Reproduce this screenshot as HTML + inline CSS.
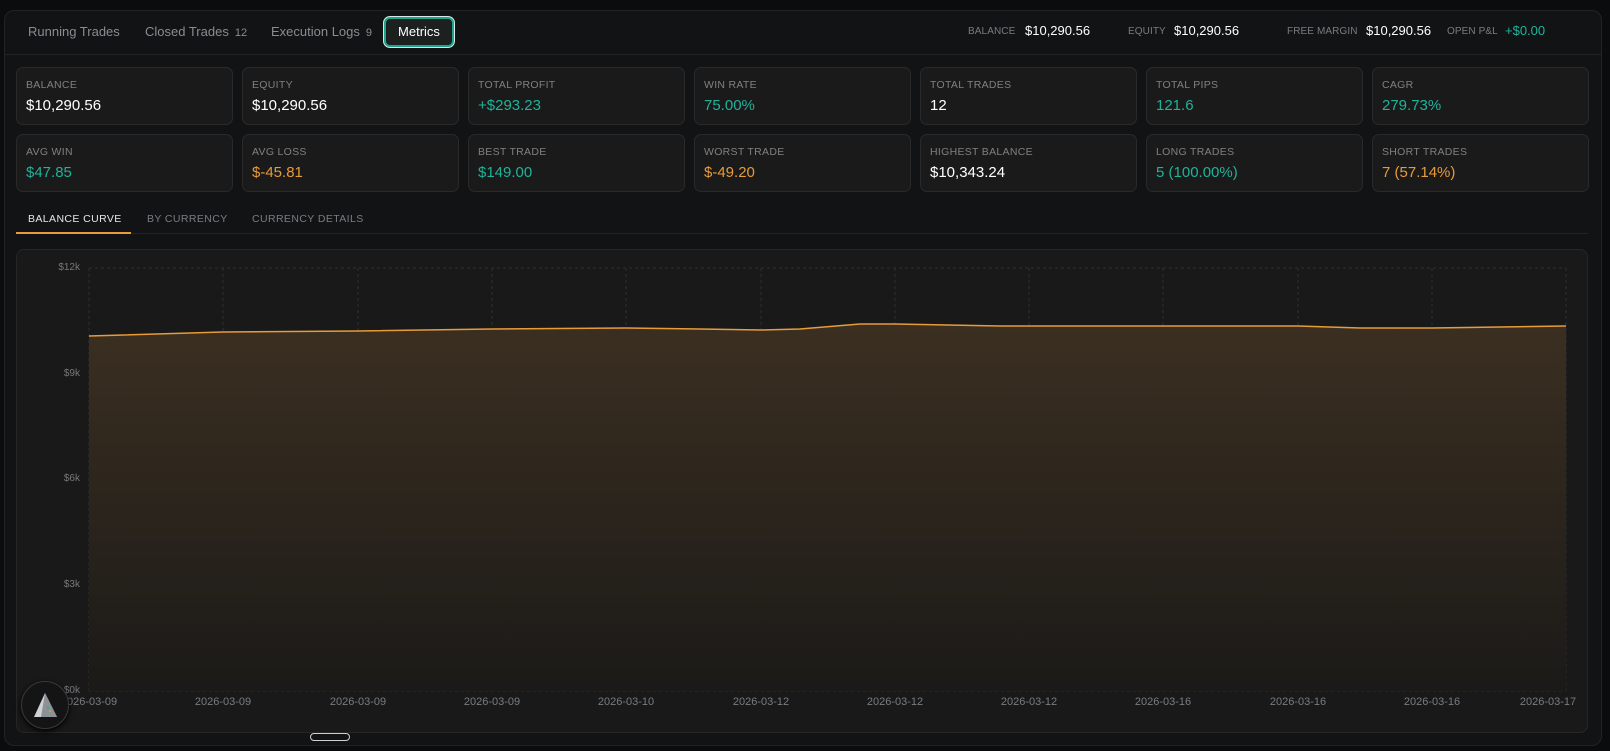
<!DOCTYPE html>
<html><head><meta charset="utf-8"><style>
*{box-sizing:border-box;margin:0;padding:0}
body{width:1610px;height:751px;background:#0b0c0d;font-family:"Liberation Sans",sans-serif;position:relative;overflow:hidden}
.panel{position:absolute;left:4px;top:10px;width:1598px;height:736px;background:#121315;border:1px solid #222325;border-radius:10px}
.tab{position:absolute;top:24px;font-size:13px;color:#8a8c90}
.tab small{font-size:11px;margin-left:6px;color:#8a8c90}
.metbtn{position:absolute;left:384px;top:17px;width:70px;height:30px;border:2px solid #1fa58f;box-shadow:0 0 0 1px #d8e8e4;border-radius:6px;background:#1c211f;color:#fff;font-size:13px;text-align:center;line-height:26px}
.divider{position:absolute;left:5px;right:0;top:54px;border-top:1px solid #23231f;width:1597px}
.st{position:absolute;top:26px;font-size:10px;color:#7a7c80;letter-spacing:.1px}
.sv{position:absolute;top:23px;font-size:13px;color:#fff}
.card{position:absolute;width:217px;height:58px;background:#1a1a1a;border:1px solid #2a2a2a;border-radius:7px}
.card .l{position:absolute;left:9px;top:11px;font-size:10.5px;color:#7f8083;letter-spacing:.3px}
.card .v{position:absolute;left:9px;top:29px;font-size:15px;color:#fff}
.g{color:#1fb39a!important}.o{color:#e89b3a!important}
.ct{position:absolute;top:213px;font-size:10.5px;letter-spacing:.4px;color:#7a7c80}
.chart{position:absolute;left:16px;top:249px;width:1572px;height:484px;background:#191919;border:1px solid #262626;border-radius:8px}
.yl{position:absolute;font-size:10px;color:#76787b;text-align:right;width:40px;left:40px}
.xl{position:absolute;top:696px;font-size:11px;color:#7a7c80;width:80px;text-align:center}
</style></head><body>
<div class="panel"></div>
<div class="tab" style="left:28px">Running Trades</div>
<div class="tab" style="left:145px">Closed Trades<small>12</small></div>
<div class="tab" style="left:271px">Execution Logs<small>9</small></div>
<div class="metbtn">Metrics</div>
<div class="divider"></div>
<div class="st" style="left:968px">BALANCE</div><div class="sv" style="left:1025px">$10,290.56</div>
<div class="st" style="left:1128px">EQUITY</div><div class="sv" style="left:1174px">$10,290.56</div>
<div class="st" style="left:1287px">FREE MARGIN</div><div class="sv" style="left:1366px">$10,290.56</div>
<div class="st" style="left:1447px">OPEN P&amp;L</div><div class="sv g" style="left:1505px">+$0.00</div>

<div class="card" style="left:16px;top:67px"><div class="l">BALANCE</div><div class="v">$10,290.56</div></div>
<div class="card" style="left:242px;top:67px"><div class="l">EQUITY</div><div class="v">$10,290.56</div></div>
<div class="card" style="left:468px;top:67px"><div class="l">TOTAL PROFIT</div><div class="v g">+$293.23</div></div>
<div class="card" style="left:694px;top:67px"><div class="l">WIN RATE</div><div class="v g">75.00%</div></div>
<div class="card" style="left:920px;top:67px"><div class="l">TOTAL TRADES</div><div class="v">12</div></div>
<div class="card" style="left:1146px;top:67px"><div class="l">TOTAL PIPS</div><div class="v g">121.6</div></div>
<div class="card" style="left:1372px;top:67px"><div class="l">CAGR</div><div class="v g">279.73%</div></div>
<div class="card" style="left:16px;top:134px"><div class="l">AVG WIN</div><div class="v g">$47.85</div></div>
<div class="card" style="left:242px;top:134px"><div class="l">AVG LOSS</div><div class="v o">$-45.81</div></div>
<div class="card" style="left:468px;top:134px"><div class="l">BEST TRADE</div><div class="v g">$149.00</div></div>
<div class="card" style="left:694px;top:134px"><div class="l">WORST TRADE</div><div class="v o">$-49.20</div></div>
<div class="card" style="left:920px;top:134px"><div class="l">HIGHEST BALANCE</div><div class="v">$10,343.24</div></div>
<div class="card" style="left:1146px;top:134px"><div class="l">LONG TRADES</div><div class="v g">5 (100.00%)</div></div>
<div class="card" style="left:1372px;top:134px"><div class="l">SHORT TRADES</div><div class="v o">7 (57.14%)</div></div>

<div class="ct" style="left:28px;color:#e6e6e6">BALANCE CURVE</div>
<div class="ct" style="left:147px">BY CURRENCY</div>
<div class="ct" style="left:252px">CURRENCY DETAILS</div>
<div style="position:absolute;left:16px;top:233px;width:1572px;border-top:1px solid #232323"></div>
<div style="position:absolute;left:16px;top:232px;width:115px;height:2px;background:#e89b3a"></div>

<div class="chart"></div>
<svg style="position:absolute;left:0;top:0" width="1610" height="751">
<defs><linearGradient id="f" x1="0" y1="0" x2="0" y2="1"><stop offset="0" stop-color="#3b2f21"/><stop offset="1" stop-color="#1b1a18"/></linearGradient></defs>
<g stroke="#2e2e2e" stroke-dasharray="3 3" stroke-width="1">
<line x1="89" y1="268" x2="1566" y2="268"/><line x1="89" y1="374" x2="1566" y2="374"/><line x1="89" y1="479" x2="1566" y2="479"/><line x1="89" y1="585" x2="1566" y2="585"/><line x1="89" y1="691" x2="1566" y2="691"/>
<line x1="89" y1="268" x2="89" y2="691"/><line x1="223" y1="268" x2="223" y2="691"/><line x1="358" y1="268" x2="358" y2="691"/><line x1="492" y1="268" x2="492" y2="691"/><line x1="626" y1="268" x2="626" y2="691"/><line x1="761" y1="268" x2="761" y2="691"/><line x1="895" y1="268" x2="895" y2="691"/><line x1="1029" y1="268" x2="1029" y2="691"/><line x1="1163" y1="268" x2="1163" y2="691"/><line x1="1298" y1="268" x2="1298" y2="691"/><line x1="1432" y1="268" x2="1432" y2="691"/><line x1="1566" y1="268" x2="1566" y2="691"/>
</g>
<path d="M89 336 L223 332 L358 331 L492 329 L626 328 L700 329 L761 330 L800 329 L860 324 L895 324 L1000 326 L1298 326 L1360 328 L1432 328 L1566 326 L1566 691 L89 691Z" fill="url(#f)"/>
<path d="M89 336 L223 332 L358 331 L492 329 L626 328 L700 329 L761 330 L800 329 L860 324 L895 324 L1000 326 L1298 326 L1360 328 L1432 328 L1566 326" fill="none" stroke="#e89b3a" stroke-width="1.5"/>
</svg>
<div class="yl" style="top:262px">$12k</div>
<div class="yl" style="top:368px">$9k</div>
<div class="yl" style="top:473px">$6k</div>
<div class="yl" style="top:579px">$3k</div>
<div class="yl" style="top:685px">$0k</div>
<div class="xl" style="left:49px">2026-03-09</div>
<div class="xl" style="left:183px">2026-03-09</div>
<div class="xl" style="left:318px">2026-03-09</div>
<div class="xl" style="left:452px">2026-03-09</div>
<div class="xl" style="left:586px">2026-03-10</div>
<div class="xl" style="left:721px">2026-03-12</div>
<div class="xl" style="left:855px">2026-03-12</div>
<div class="xl" style="left:989px">2026-03-12</div>
<div class="xl" style="left:1123px">2026-03-16</div>
<div class="xl" style="left:1258px">2026-03-16</div>
<div class="xl" style="left:1392px">2026-03-16</div>
<div class="xl" style="left:1508px">2026-03-17</div>
<div style="position:absolute;left:21px;top:681px;width:48px;height:48px;border-radius:50%;background:#141414;border:1px solid #3a3a3a;box-shadow:0 2px 6px #000"></div>
<svg style="position:absolute;left:21px;top:681px" width="48" height="48"><path d="M24 12 L13 36 L36 36 Z" fill="#cfd2d4"/><path d="M24 12 L20 36 L36 36Z" fill="#8d9094"/><circle cx="27" cy="27" r="1.2" fill="#1fb39a"/><circle cx="29" cy="30" r="1" fill="#e89b3a"/></svg>
<div style="position:absolute;left:310px;top:733px;width:40px;height:8px;border:1.5px solid #d0d0d0;border-radius:5px"></div>
</body></html>
